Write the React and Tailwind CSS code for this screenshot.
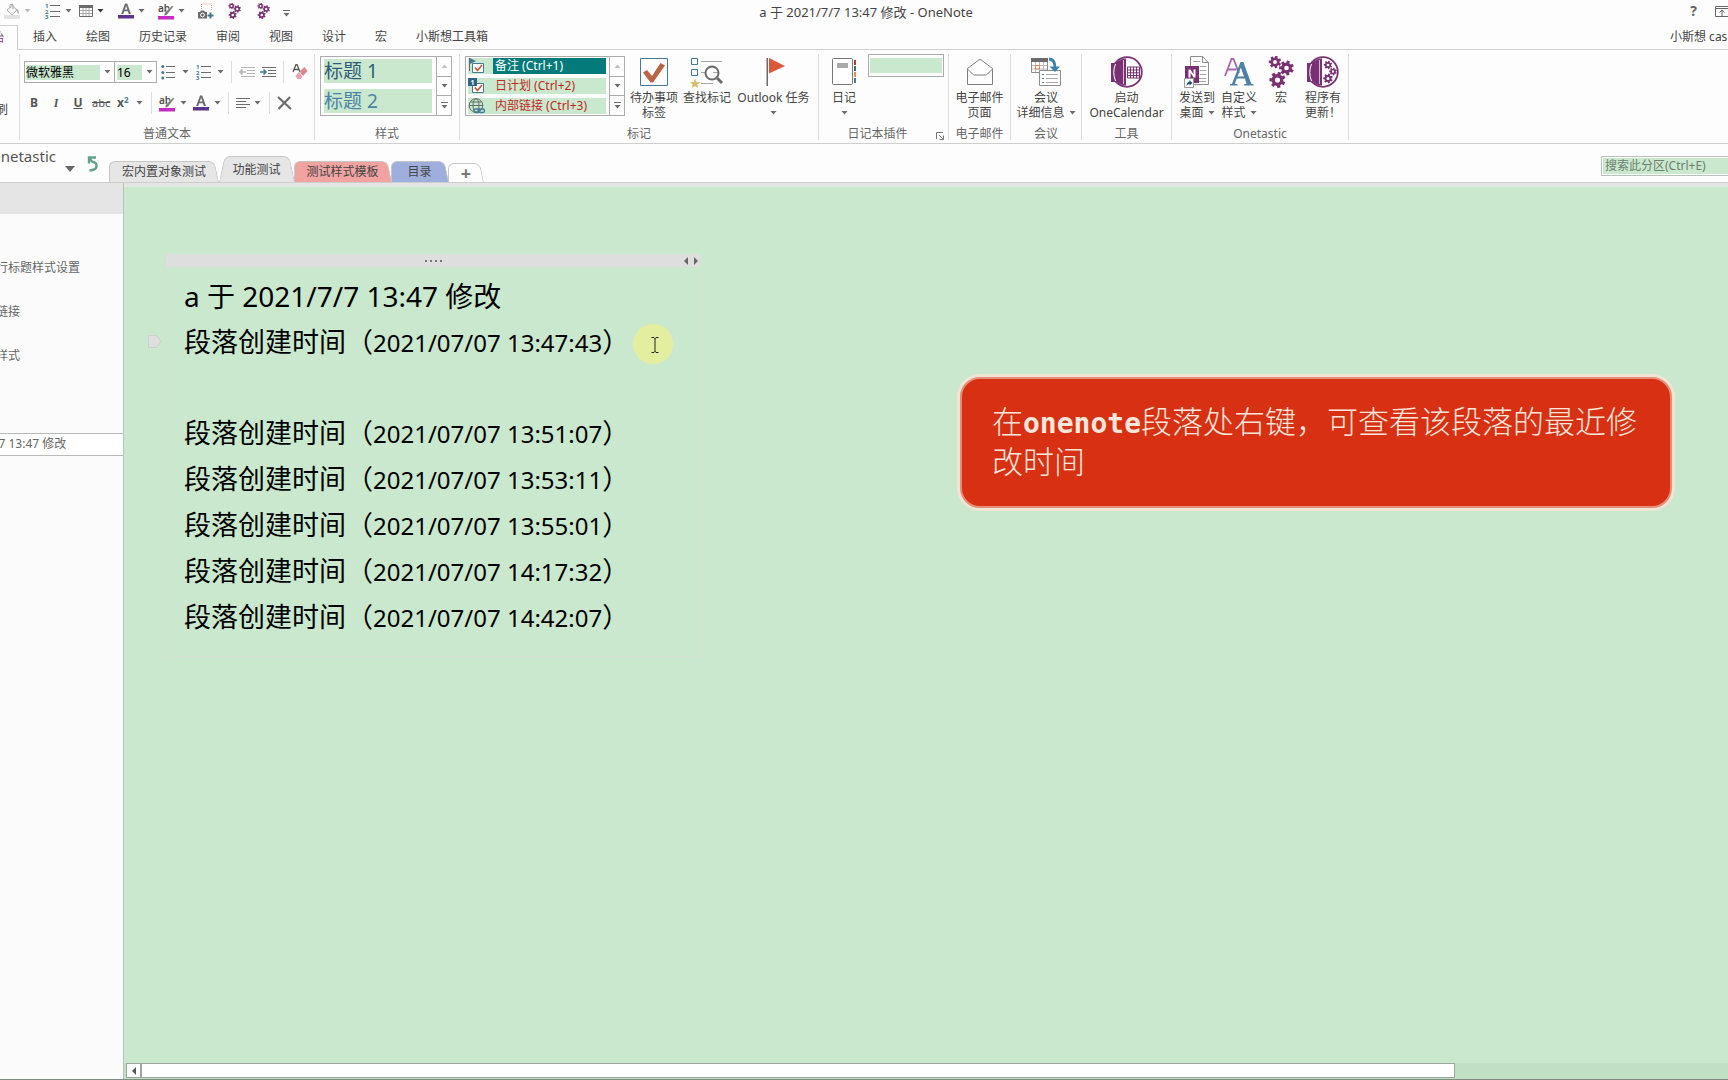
import { useState } from "react";
import clsx from "clsx";

const PURPLE = "#7a3173";
const GRAY = "#6b6b6b";
const BLUE = "#447a96";

const Caret = ({ className = "", color = GRAY }) => (
  <svg viewBox="0 0 7 4" className={clsx("w-[7px] h-1 shrink-0", className)}>
    <path d="M0.5 0h6L3.5 3.6z" fill={color} />
  </svg>
);

const MoreCaret = ({ className = "" }) => (
  <svg viewBox="0 0 7 7" className={clsx("w-[7px] h-[7px] shrink-0", className)}>
    <path d="M0.5 3h6L3.5 6.6zM0 0h7v1H0z" fill={GRAY} />
  </svg>
);

const Divider = ({ className = "" }) => <span className={clsx("w-px h-[22px] bg-[#dcdcdc] shrink-0", className)} />;

const Gear = ({ x, y, r, color = PURPLE }) => (
  <g transform={`translate(${x} ${y})`}>
    {[0, 51, 103, 154, 206, 257, 309].map((a) => (
      <rect key={a} x={-r * 0.2} y={-r} width={r * 0.4} height={r * 0.5} fill={color} transform={`rotate(${a + 15})`} />
    ))}
    <circle r={r * 0.53} fill="none" stroke={color} strokeWidth={r * 0.42} />
  </g>
);

const GearsIcon = ({ className }) => (
  <svg viewBox="0 0 26 32" className={className}>
    <Gear x={7} y={6} r={6.2} />
    <Gear x={18.5} y={12} r={7.4} />
    <Gear x={9.5} y={24} r={8} />
  </svg>
);

const BucketIcon = ({ className }) => (
  <svg viewBox="0 0 16 16" className={className} fill="none">
    <path d="M3 7l5-4.5 5 4.5-5 5z" fill="#f4f4f4" stroke="#a8a8a8" />
    <path d="M6 5V1.5h3V6" stroke="#a8a8a8" />
    <path d="M13 6c2 1.500 2 3 1.500 5-1-.5-1.500-2-1.500-5z" fill="#a8a8a8" />
    <path d="M0 12h16v4H0z" fill="#e2e2e2" />
  </svg>
);

const NumberedIcon = ({ className }) => (
  <svg viewBox="0 0 15 16" className={clsx("overflow-visible", className)}>
    <g fill={BLUE} fontFamily="Noto Sans" fontSize="6" fontWeight="700">
      <text x="0" y="5">1</text>
      <text x="0" y="10.500">2</text>
      <text x="0" y="16">3</text>
    </g>
    <path d="M5 2.500h10M5 8.500h10M5 13.500h10" stroke={GRAY} />
  </svg>
);

const BulletsIcon = ({ className }) => (
  <svg viewBox="0 0 14 16" className={className}>
    <circle cx="1.800" cy="2.500" r="1.500" fill={BLUE} />
    <circle cx="1.800" cy="8.500" r="1.500" fill={BLUE} />
    <circle cx="1.800" cy="14" r="1.500" fill={BLUE} />
    <path d="M5 2.500h9M5 8.500h9M5 13.500h9" stroke={GRAY} />
  </svg>
);

const TableIcon = ({ className }) => (
  <svg viewBox="0 0 14 12" className={className}>
    <path d="M0.500 0.500h13v11h-13z" fill="#fff" stroke={GRAY} />
    <path d="M0 0h14v3H0z" fill={GRAY} />
    <path d="M1 5.500h12M1 8.500h12M4 3v8M7 3v8M10 3v8" stroke="#9a9a9a" strokeWidth="0.8" />
  </svg>
);

const FontColorIcon = ({ className }) => (
  <svg viewBox="0 0 16 16" className={className}>
    <path d="M3.200 11L7 0.500h2.200L13 11h-2.200l-.9-2.700H6.200L5.300 11zM6.800 6.600h2.600L8.100 2.700z" fill={GRAY} />
    <path d="M0 12h16v3.500H0z" fill="#5b3390" />
  </svg>
);

const HighlightIcon = ({ className }) => (
  <svg viewBox="0 0 16 17" className={clsx("overflow-visible", className)}>
    <text x="0" y="8.500" fontFamily="Noto Sans" fontSize="10" fontWeight="600" fill="#4d4d4d">ab</text>
    <path d="M15.500 3.500L9 12l-3 1 .5-3L14 2.500z" fill="#7c7c7c" stroke="#fff" strokeWidth="0.5" />
    <path d="M0 13h16v3.500H0z" fill="#c32bc3" />
  </svg>
);

const CameraIcon = ({ className }) => (
  <svg viewBox="0 0 16 16" className={className}>
    <path d="M3.500 6V1h10v7" fill="none" stroke="#d8a58c" strokeDasharray="1 1" />
    <path d="M0 9h2l1-1.500h3L7 9h2v6.500H0z" fill={GRAY} />
    <circle cx="4.500" cy="12" r="1.900" fill={GRAY} stroke="#fff" />
    <path d="M12.500 9.500v6M9.500 12.500h6" stroke={BLUE} strokeWidth="2" />
  </svg>
);

const IndentIcon = ({ className, flip, color, arrow }) => (
  <svg viewBox="0 0 16 12" className={className} fill="none">
    <path d="M2 1.500h14M8 4.500h8M8 7.500h8M2 10.500h14" stroke={color} />
    <path d={flip ? "M7 6H1M3.500 3.500L1 6l2.500 2.500" : "M0 6h6M3.500 3.500L6 6 3.500 8.500"} stroke={arrow} strokeWidth="1.600" />
  </svg>
);

const EraserIcon = ({ className }) => (
  <svg viewBox="0 0 16 16" className={className}>
    <path d="M1 8L4 0.500h1L8 8M2.500 5.500h4" fill="none" stroke="#555" strokeWidth="1.300" />
    <path d="M7.500 7.500L12.500 3l3 4-4.500 5z" fill="#dd8592" />
    <path d="M7 8l3.500 4.500L8.500 15h-3L3.500 12z" fill="#eaa3ad" />
  </svg>
);

const CheckMark = ({ x = 0, y = 0 }) => (
  <g transform={`translate(${x} ${y})`}>
    <path d="M0.500 0.500h11v9h-11z" fill="#fff" stroke={BLUE} />
    <path d="M3 4.500l2.500 3L10 2" fill="none" stroke="#c7583c" strokeWidth="1.700" />
  </g>
);

const TagFlagIcon = () => (
  <svg viewBox="0 0 18 16" className="w-[18px] h-4">
    <CheckMark x={4} y={5} />
    <path d="M1.500 0v13" stroke={GRAY} />
    <path d="M2 0l6 3-6 3z" fill={BLUE} />
  </svg>
);

const TagNumberIcon = () => (
  <svg viewBox="0 0 18 16" className="w-[18px] h-4 overflow-visible">
    <CheckMark x={4} y={5} />
    <path d="M0 0h9v8H0z" fill="#2f6484" />
    <text x="2.500" y="7" fontFamily="Noto Sans" fontSize="7" fontWeight="700" fill="#fff">1</text>
  </svg>
);

const TagGlobeIcon = () => (
  <svg viewBox="0 0 18 16" className="w-[18px] h-4" fill="none" stroke="#5f6f6a">
    <circle cx="8" cy="7.500" r="6.800" />
    <ellipse cx="8" cy="7.500" rx="3" ry="6.800" />
    <path d="M1 7.500h14M2.500 4h11" />
    <rect x="6" y="11" width="6" height="3.500" rx="1.700" stroke={BLUE} strokeWidth="1.400" />
    <rect x="10.500" y="11" width="6" height="3.500" rx="1.700" stroke={BLUE} strokeWidth="1.400" />
  </svg>
);

const TodoIcon = () => (
  <svg viewBox="0 0 28 28" className="size-7">
    <path d="M0.500 0.500h27v27h-27z" fill="#fff" stroke={BLUE} />
    <path d="M3 14.500l4-2.500 5 6L20.500 5l4.500 2.500L13 24.500h-2.500z" fill="#bc6446" />
  </svg>
);

const FindTagsIcon = () => (
  <svg viewBox="0 0 32 30" className="w-8 h-[30px] overflow-visible" fill="none">
    <path d="M0.500 1.500h6v6h-6zM0.500 12.500h6v6h-6z" stroke={BLUE} />
    <path d="M10 4.500h21M10 15.500h4M22 15.500h5M10 26.500h12" stroke="#a5a5a5" />
    <path d="M4 21.500l1.400 3.400 3.600.3-2.700 2.300.8 3.200L4 29.200.9 30.700l.8-3.200L-1 25.200l3.600-.3z" fill="#d9bd6b" />
    <circle cx="21" cy="16" r="6.500" stroke={GRAY} strokeWidth="2" />
    <path d="M26 21l5 5" stroke={GRAY} strokeWidth="3" />
  </svg>
);

const FlagIcon = () => (
  <svg viewBox="0 0 20 28" className="ml-1 w-5 h-7">
    <path d="M0.500 0h1.500v28H0.500z" fill={GRAY} />
    <path d="M3 0l16 8L3 15.500z" fill="#db583a" />
  </svg>
);

const DiaryIcon = () => (
  <svg viewBox="0 0 24 28" className="w-6 h-7">
    <rect x="0.500" y="0.500" width="20" height="26" rx="1" fill="#fff" stroke="#777" />
    <path d="M5 5h11v5H5z" fill="#aaa" />
    <path d="M22 2h2v5h-2z" fill="#a6452f" />
    <path d="M22 8h2v5h-2z" fill="#3f7264" />
    <path d="M22 14h2v5h-2z" fill="#de8b55" />
    <path d="M22 20h2v5h-2z" fill="#447a96" />
  </svg>
);

const MailIcon = () => (
  <svg viewBox="0 0 26 26" className="size-[26px]" fill="#fff" stroke="#7d7d7d">
    <path d="M0.500 9.500L12 .8q1-.6 2 0l11.500 8.700v16H.5z" />
    <path d="M0.500 10l5.500 5.500q.7.500 1.500.500h11q.8 0 1.500-.5l5.500-5.500" fill="none" />
  </svg>
);

const MeetingIcon = () => (
  <svg viewBox="0 0 30 30" className="size-[30px]" fill="none">
    <path d="M0.500 1.500h16v14h-16z" fill="#fff" stroke="#8c8c8c" />
    <path d="M0 1h17v4H0z" fill={GRAY} />
    <path d="M4.500 5v10M8.500 5v10M12.500 5v10M1 8.500h15M1 12h15" stroke="#b9b9b9" />
    <path d="M4.500 8.500h4v3.500h-4z" stroke="#dc8a50" />
    <path d="M8.500 13.500h21v15h-21z" fill="#fff" stroke="#8c8c8c" />
    <path d="M11 17.500h2M11 21.500h2M11 25.500h2" stroke={BLUE} />
    <path d="M15 17.500h12M15 21.500h12M15 25.500h12" stroke="#a9a9a9" />
    <path d="M18 2q6 0 6 9" stroke="#3d82ad" strokeWidth="2.800" />
    <path d="M18.500 9.500L24 15l5-5.500z" fill="#3d82ad" />
  </svg>
);

const NotebookCircle = ({ children }) => (
  <svg viewBox="0 0 32 32" className="size-8">
    <circle cx="16" cy="16" r="14.800" fill="#fff" stroke={PURPLE} strokeWidth="1.800" />
    <path d="M0 7h5v19H0z" fill={PURPLE} />
    <path d="M15 2.500v27A13.500 13.500 0 0 1 15 2.500z" fill={PURPLE} />
    <path d="M4.500 8q-3.500 8 0 17" stroke="#fff" fill="none" />
    <path d="M12.500 4v24" stroke="#d9b5d5" />
    {children}
  </svg>
);

const OneCalendarIcon = () => (
  <NotebookCircle>
    <path d="M16.500 11h12v11h-12z" fill="#fff" stroke={PURPLE} />
    <path d="M17 14h11M17 16.800h11M17 19.500h11M19.500 11v11M22.500 11v11M25.500 11v11" stroke={PURPLE} />
  </NotebookCircle>
);

const UpdateIcon = () => (
  <NotebookCircle>
    <Gear x={21} y={9} r={4.200} />
    <Gear x={26} y={15.500} r={3.800} />
    <Gear x={21} y={22.500} r={4.800} />
  </NotebookCircle>
);

const SendDesktopIcon = () => (
  <svg viewBox="0 0 26 32" className="w-[26px] h-8">
    <path d="M6.500 0.500h12l6 6v22h-18z" fill="#fff" stroke="#8c8c8c" />
    <path d="M18.500 0.500v6h6" fill="none" stroke="#8c8c8c" />
    <path d="M9 5.500h7M16 10.500h6M16 14.500h6M16 18.500h6M13 22.500h9M13 25.500h9" stroke="#a8a8a8" />
    <path d="M1 10h14v17H1z" fill={PURPLE} />
    <path d="M4.500 21.500v-8h2l3 5v-5h2v8h-2l-3-5v5z" fill="#fff" />
    <path d="M0.500 22.500h9v9h-9z" fill="#fff" stroke="#999" />
    <path d="M2.500 30q0-4 3-4.500V24l3 3-3 2.500V28q-2 0-3 2z" fill="#1f5475" />
  </svg>
);

const CustomStyleIcon = () => (
  <svg viewBox="0 0 30 30" className="size-[30px]">
    <path d="M1 19L7.500 2h2L15 16M3.500 12.500h9" fill="none" stroke="#a668a8" strokeWidth="1.800" />
    <path d="M6 28.500v-1.200l2-.5L16.500 5h2.800l8 21.800 2.200.5v1.200h-9.500v-1.200l2.500-.5-1.700-5.300h-8l-1.900 5.300 2.600.5v1.200zM13.500 19.500h6.500l-3.200-9z" fill="#4c80a4" />
  </svg>
);

const Group = ({ label, className, children, launcher }) => (
  <section className={clsx("flex flex-col shrink-0 h-[86px] border-r border-[#dcdcdc]", className)}>
    <div className="flex-1 min-h-0">{children}</div>
    <div className="flex items-center text-[#666] leading-3">
      <span className="flex-1 text-center whitespace-nowrap">{label}</span>
      {launcher && (
        <button aria-label="更多选项" className="mr-1 mt-1 w-2">
          <svg viewBox="0 0 8 8" className="size-2" fill="none" stroke="#777">
            <path d="M0.500 7V0.500H7M3 3l4 4M7.500 3.500v4h-4" />
          </svg>
        </button>
      )}
    </div>
  </section>
);

const BigButton = ({ icon, lines, caret, className }) => (
  <button className={clsx("flex flex-col items-center shrink-0 leading-[15px] whitespace-nowrap", className)}>
    <span className="flex h-8 mb-0.5 items-center justify-center">{icon}</span>
    <span>{lines[0]}</span>
    <span className="flex h-[15px] items-center gap-1">
      {lines[1]}
      {caret && <Caret />}
    </span>
  </button>
);

const GalleryButtons = () => (
  <div className="flex flex-col w-[15px] border-l border-[#ababab] divide-y divide-[#ababab]">
    <button aria-label="上一行" className="flex flex-1 items-center justify-center">
      <Caret className="rotate-180" color="#c0c0c0" />
    </button>
    <button aria-label="下一行" className="flex flex-1 items-center justify-center"><Caret /></button>
    <button aria-label="展开" className="flex flex-1 items-center justify-center"><MoreCaret /></button>
  </div>
);

const QuickAccess = () => (
  <div className="flex flex-1 items-center pl-1 h-[22px]">
    <button aria-label="填充"><BucketIcon className="size-4" /></button>
    <Caret className="ml-1" color="#bdbdbd" />
    <button aria-label="编号" className="ml-[14px]"><NumberedIcon className="w-[15px] h-4" /></button>
    <Caret className="ml-[5px]" />
    <button aria-label="表格" className="ml-[7px]"><TableIcon className="w-[14px] h-3" /></button>
    <Caret className="ml-1" color="#333" />
    <button aria-label="字体颜色" className="ml-[14px]"><FontColorIcon className="size-4" /></button>
    <Caret className="ml-1" />
    <button aria-label="突出显示" className="ml-[13px]"><HighlightIcon className="w-4 h-[17px]" /></button>
    <Caret className="ml-1" />
    <button aria-label="屏幕剪辑" className="ml-[13px]"><CameraIcon className="size-4" /></button>
    <button aria-label="宏一" className="ml-[14px]"><GearsIcon className="w-[13px] h-4" /></button>
    <button aria-label="宏二" className="ml-4"><GearsIcon className="w-[13px] h-4" /></button>
    <MoreCaret className="ml-[13px] mt-1" />
  </div>
);

const TextGroup = () => {
  const [font, setFont] = useState("微软雅黑");
  const [size, setSize] = useState("16");

  return (
    <Group label="普通文本" className="w-[295px]">
      <div className="flex items-center pl-1 mt-[7px] h-[22px]">
        <label className="flex items-center h-full w-[91px] border border-[#ababab] pl-px">
          <select aria-label="字体" value={font} onChange={(e) => setFont(e.target.value)} className="appearance-none w-[74px] h-[15px] leading-[15px] bg-[#cae8ce] text-black outline-none">
            <option>微软雅黑</option>
            <option>Calibri</option>
          </select>
          <Caret className="ml-1" />
        </label>
        <label className="flex items-center h-full w-[42px] border border-l-0 border-[#ababab] pl-0.5">
          <select aria-label="字号" value={size} onChange={(e) => setSize(e.target.value)} className="appearance-none w-[25px] h-[15px] leading-[15px] bg-[#cae8ce] text-black outline-none">
            <option>16</option>
            <option>18</option>
          </select>
          <Caret className="ml-1" />
        </label>
        <button aria-label="项目符号" className="ml-1"><BulletsIcon className="w-[14px] h-4" /></button>
        <Caret className="ml-[7px]" />
        <button aria-label="编号" className="ml-[7px]"><NumberedIcon className="w-[15px] h-4" /></button>
        <Caret className="ml-1.5" />
        <Divider className="ml-[7px]" />
        <button aria-label="减少缩进" className="ml-[7px]"><IndentIcon flip color="#b5b5b5" arrow="#b5b5b5" className="w-4 h-3" /></button>
        <button aria-label="增加缩进" className="ml-[5px]"><IndentIcon color={GRAY} arrow={BLUE} className="w-4 h-3" /></button>
        <Divider className="ml-[7px]" />
        <button aria-label="清除格式" className="ml-2"><EraserIcon className="size-4" /></button>
      </div>
      <div className="flex items-center pl-1 mt-[9px] h-[22px] text-[#555]">
        <button className="w-5 font-bold">B</button>
        <button className="w-6 font-bold italic font-['Liberation_Serif',serif]">I</button>
        <button className="w-5 font-bold underline">U</button>
        <button className="ml-1 w-[18px] text-[11px] line-through">abc</button>
        <button className="ml-[7px] w-4 font-bold text-left">x<sup className="text-[8px] text-[#447a96]">2</sup></button>
        <Caret className="ml-[3px]" />
        <Divider className="ml-2" />
        <button aria-label="突出显示" className="ml-[7px]"><HighlightIcon className="w-4 h-[17px]" /></button>
        <Caret className="ml-[5px]" />
        <button aria-label="字体颜色" className="ml-1.5"><FontColorIcon className="size-4" /></button>
        <Caret className="ml-[5px]" />
        <Divider className="ml-[7px]" />
        <button aria-label="对齐" className="ml-[7px]">
          <svg viewBox="0 0 14 12" className="w-[14px] h-3"><path d="M0 1.500h14M0 4.500h10M0 7.500h14M0 10.500h10" stroke={GRAY} /></svg>
        </button>
        <Caret className="ml-1" />
        <Divider className="ml-2" />
        <button aria-label="删除" className="ml-[7px]">
          <svg viewBox="0 0 15 14" className="w-[15px] h-[14px]"><path d="M1 1l13 12M13 1L1.500 13" stroke={GRAY} strokeWidth="2.200" /></svg>
        </button>
      </div>
    </Group>
  );
};

const tags = [
  { icon: <TagFlagIcon />, name: "备注 (Ctrl+1)", selected: true },
  { icon: <TagNumberIcon />, name: "日计划 (Ctrl+2)" },
  { icon: <TagGlobeIcon />, name: "内部链接 (Ctrl+3)" },
];

const Ribbon = () => (
  <div className="flex h-[94px] shrink-0 pt-1 border-b border-[#cfcfcf] overflow-hidden">
    <div className="w-5 h-[86px] shrink-0 border-r border-[#dcdcdc] overflow-hidden">
      <button className="-ml-1 mt-12 leading-4">刷</button>
    </div>
    <TextGroup />
    <Group label="样式" className="w-[145px]">
      <div className="flex mt-0.5 ml-[5px] w-[132px] h-[60px] border border-[#ababab]">
        <div className="flex flex-1 flex-col gap-1.5 pt-0.5 pl-[3px] pr-1 whitespace-nowrap">
          <button className="h-6 bg-[#cae8ce] text-left text-[19px] leading-6 text-[#2e5c78]">标题 1</button>
          <button className="h-6 bg-[#cae8ce] text-left text-[19px] leading-6 text-[#4a83a6]">标题 2</button>
        </div>
        <GalleryButtons />
      </div>
    </Group>
    <Group label="标记" className="w-[359px]">
      <div className="flex pt-0.5 pl-[5px]">
        <div className="flex w-40 h-[60px] border border-[#ababab]">
          <div className="flex flex-1 flex-col justify-between py-px pl-0.5 pr-[3px] whitespace-nowrap">
            {tags.map((tag) => (
              <button key={tag.name} className="flex h-4 bg-[#cae8ce] text-left">
                <span className="w-[25px]">{tag.icon}</span>
                <span className={clsx("flex-1 pl-0.5 leading-4", tag.selected ? "bg-[#047a7a] text-white" : "text-[#c0281c]")}>{tag.name}</span>
              </button>
            ))}
          </div>
          <GalleryButtons />
        </div>
        <BigButton className="ml-[3px] w-[52px]" icon={<TodoIcon />} lines={["待办事项", "标签"]} />
        <BigButton className="w-[54px]" icon={<FindTagsIcon />} lines={["查找标记"]} />
        <BigButton className="w-[79px]" icon={<FlagIcon />} lines={["Outlook 任务"]} caret />
      </div>
    </Group>
    <Group label="日记本插件" className="w-[130px]" launcher>
      <div className="flex">
        <BigButton className="mt-0.5 ml-1 w-[42px]" icon={<DiaryIcon />} lines={["日记"]} caret />
        <div className="ml-[3px] w-[76px] h-[23px] border border-[#ababab] px-px py-[3px]">
          <div className="h-[15px] bg-[#cae8ce]" />
        </div>
      </div>
    </Group>
    <Group label="电子邮件" className="w-[62px]">
      <BigButton className="pt-0.5 w-full" icon={<MailIcon />} lines={["电子邮件", "页面"]} />
    </Group>
    <Group label="会议" className="w-[71px]">
      <BigButton className="pt-0.5 w-full" icon={<MeetingIcon />} lines={["会议", "详细信息"]} caret />
    </Group>
    <Group label="工具" className="w-[90px]">
      <BigButton className="pt-0.5 w-full" icon={<OneCalendarIcon />} lines={["启动", "OneCalendar"]} />
    </Group>
    <Group label="Onetastic" className="w-[177px]">
      <div className="flex pt-0.5 pl-1">
        <BigButton className="w-[42px]" icon={<SendDesktopIcon />} lines={["发送到", "桌面"]} caret />
        <BigButton className="w-[42px]" icon={<CustomStyleIcon />} lines={["自定义", "样式"]} caret />
        <BigButton className="w-[42px]" icon={<GearsIcon className="w-[26px] h-8" />} lines={["宏"]} />
        <BigButton className="w-[42px]" icon={<UpdateIcon />} lines={["程序有", "更新！"]} />
      </div>
    </Group>
  </div>
);

const menus = ["插入", "绘图", "历史记录", "审阅", "视图", "设计", "宏", "小斯想工具箱"];

const sections = [
  { name: "宏内置对象测试", size: "w-[110px] h-[21px]", fill: "before:bg-[#e6e6e6] after:bg-[#e6e6e6]" },
  { name: "功能测试", size: "w-[75px] h-[26px] pt-0.5 z-10", fill: "before:bg-[#e6e6e6] after:bg-[#e6e6e6]", slanted: true },
  { name: "测试样式模板", size: "w-[97px] h-[21px]", fill: "before:bg-[#f0a3a1] after:bg-[#f0a3a1]" },
  { name: "目录", size: "w-[57px] h-[21px]", fill: "before:bg-[#9eafdd] after:bg-[#9eafdd]" },
  { name: "+", size: "w-[36px] h-[19px]", fill: "before:bg-[#fdfdfd] after:bg-[#fdfdfd]" },
];

const SectionTab = ({ section }) => (
  <button
    className={clsx(
      "relative isolate flex items-center justify-center whitespace-nowrap text-[#444]",
      "before:absolute before:inset-y-0 before:left-0 before:w-1/2 before:-z-10 before:rounded-tl-md before:border-t before:border-l before:border-[#c6c6c6]",
      "after:absolute after:inset-y-0 after:right-0 after:w-1/2 after:-z-10 after:rounded-tr-md after:border-t after:border-r after:border-[#c6c6c6] after:origin-bottom after:skew-x-[12deg]",
      section.slanted && "before:origin-bottom before:-skew-x-12",
      section.name === "+" && "text-lg font-bold leading-4 text-[#777]",
      section.size,
      section.fill
    )}
  >
    {section.name}
  </button>
);

const SectionBar = () => (
  <div className="flex h-[39px] shrink-0 border-b border-[#cdcdcd]">
    <div className="flex w-[109px] shrink-0 overflow-hidden">
      <button className="flex -ml-[11px] h-6 text-[15px] leading-6 text-[#555]">Onetastic</button>
      <svg viewBox="0 0 10 6" className="mt-[22px] ml-[9px] w-2.5 h-1.5 shrink-0"><path d="M0 0h10L5 6z" fill="#666" /></svg>
      <button aria-label="撤消" className="ml-3 mt-3 self-start">
        <svg viewBox="0 0 11 16" className="w-[11px] h-4" fill="none" stroke="#63a18d" strokeWidth="2.400">
          <path d="M9 1.500H2v6M2 2L5 5.500q5 1 4.500 5Q9 14 2.500 14.500" />
        </svg>
      </button>
    </div>
    <nav className="flex items-end">
      {sections.map((s) => <SectionTab key={s.name} section={s} />)}
    </nav>
    <label className="ml-auto mt-3 w-[127px] h-5 border border-r-0 border-[#b5c4b7] p-px pr-0">
      <input aria-label="搜索此分区" placeholder="搜索此分区(Ctrl+E)" className="block w-full h-4 bg-[#cae8ce] pl-0.5 leading-4 outline-none placeholder:text-[#6c7f70]" />
    </label>
  </div>
);

const pages = ["行标题样式设置", "链接", "样式"];

const PageList = () => (
  <aside className="flex flex-col w-[124px] shrink-0 bg-[#fbfbfc] border-r border-[#b4c4b7] overflow-hidden text-[#666] whitespace-nowrap">
    <div className="h-[31px] shrink-0 bg-[#e5e5e5]" />
    <ul className="mt-8 mb-[55px] -ml-1">
      {pages.map((p) => (
        <li key={p} className="h-11"><a href="#" className="block leading-11">{p}</a></li>
      ))}
    </ul>
    <a href="#" className="block h-[23px] border-y border-[#b9b9b9] bg-white leading-5">
      <span className="block -ml-1.5">/7 13:47 修改</span>
    </a>
  </aside>
);

const times = ["13:47:43", "", "13:51:07", "13:53:11", "13:55:01", "14:17:32", "14:42:07"];

const Note = () => (
  <article className="absolute left-[41px] top-[67px] w-[536px] h-[403px] border border-[#d3e0d2] text-black">
    <div className="flex items-center h-[13px] -mt-px bg-[#dedede]">
      <span className="flex flex-1 justify-center gap-[3px] pl-4">
        {[0, 1, 2, 3].map((i) => <i key={i} className="size-0.5 bg-[#777]" />)}
      </span>
      <svg viewBox="0 0 14 8" className="w-[14px] h-2 mr-0.5"><path d="M4 0v8L0 4zM10 0v8l4-4z" fill="#666" /></svg>
    </div>
    <h1 className="mt-1.5 pl-[18px] text-[28px] leading-[46px] whitespace-nowrap">a 于 2021/7/7 13:47 修改</h1>
    {times.map((t, i) => (
      <p key={i} className={clsx("pl-[18px] text-[27px] leading-[46px] whitespace-nowrap", t ? "h-[46px]" : "h-[45px]")}>
        {t && <>段落创建时间（<span className="text-2xl leading-none">2021/07/07 {t}</span>）</>}
      </p>
    ))}
  </article>
);

const Canvas = () => (
  <main className="relative flex flex-1 min-w-0 flex-col justify-end bg-[#cae8ce] border-t-4 border-[#e3e6e3] overflow-hidden">
    <Note />
    <svg viewBox="0 0 14 13" className="absolute left-6 top-[148px] w-[14px] h-[13px]">
      <path d="M0.500 0.500h8L13 6.500l-4.500 6h-8z" fill="#dedede" stroke="#c9cfc9" />
    </svg>
    <div className="absolute left-[509px] top-[137px] flex size-10 items-center justify-center rounded-full bg-[#e4ee9f]">
      <svg viewBox="0 0 8 16" className="ml-1 mt-0.5 w-2 h-4"><path d="M0.500 0.500h2.500l1 1 1-1H7.500M4 1v14M0.500 15.500h2.500l1-1 1 1H7.500" fill="none" stroke="#222" /></svg>
    </div>
    <div className="absolute left-[836px] top-[190px] w-[712px] rounded-[20px] ring-3 ring-[#f0e4d2]">
      <p className="h-[131px] rounded-[20px] border-2 border-[#e58d78] bg-[#d73012] pl-[30px] pr-5 pt-[22px] text-[31px] leading-10 font-light text-[#fbe6dc]">
        在<b className="font-['DejaVu_Sans_Mono',monospace] text-[28px] leading-none font-bold">onenote</b>段落处右键，可查看该段落的最近修改时间
      </p>
    </div>
    <div className="flex h-4 pl-0.5 bg-[#c1dfc5]">
      <button aria-label="向左滚动" className="flex w-[15px] h-[15px] items-center justify-center border border-[#9aa79c] bg-white">
        <svg viewBox="0 0 4 8" className="w-1 h-2"><path d="M4 0v8L0 4z" fill="#555" /></svg>
      </button>
      <div className="w-[82%] h-[15px] border border-[#9aa79c] bg-white" />
    </div>
  </main>
);

const App = () => (
  <div className="flex flex-col h-screen overflow-hidden bg-[#fdfdfd] text-xs text-[#444] font-['Noto_Sans','Noto_Sans_CJK_SC',sans-serif] border-b border-[#7f8a81]">
    <header className="flex h-[25px] shrink-0 overflow-hidden">
      <QuickAccess />
      <div className="text-[13px] leading-6">a 于 2021/7/7 13:47 修改 - OneNote</div>
      <div className="flex flex-1 items-center justify-end gap-[18px] h-[22px]">
        <button className="text-sm font-bold text-[#666]">?</button>
        <button aria-label="功能区显示选项" className="-mr-[3px]">
          <svg viewBox="0 0 16 11" className="w-4 h-[11px]" fill="none" stroke="#666"><path d="M0.500 0.500h15v10H.5zM0 2.500h16M7 10V4.500M4.500 6.500L7 4l2.500 2.500" /></svg>
        </button>
      </div>
    </header>
    <nav className="flex h-[25px] shrink-0 whitespace-nowrap leading-6">
      <div className="w-[18px] border-t border-r border-[#cfcfcf] overflow-hidden">
        <button className="-ml-2 text-[#80397b]">始</button>
      </div>
      <div className="flex flex-1 gap-[29px] pl-[15px] border-b border-[#cfcfcf]">
        {menus.map((m) => <button key={m}>{m}</button>)}
        <span className="ml-auto w-[58px] overflow-hidden">小斯想 cas</span>
      </div>
    </nav>
    <Ribbon />
    <SectionBar />
    <div className="flex flex-1 min-h-0">
      <PageList />
      <Canvas />
    </div>
  </div>
);

export default App;
